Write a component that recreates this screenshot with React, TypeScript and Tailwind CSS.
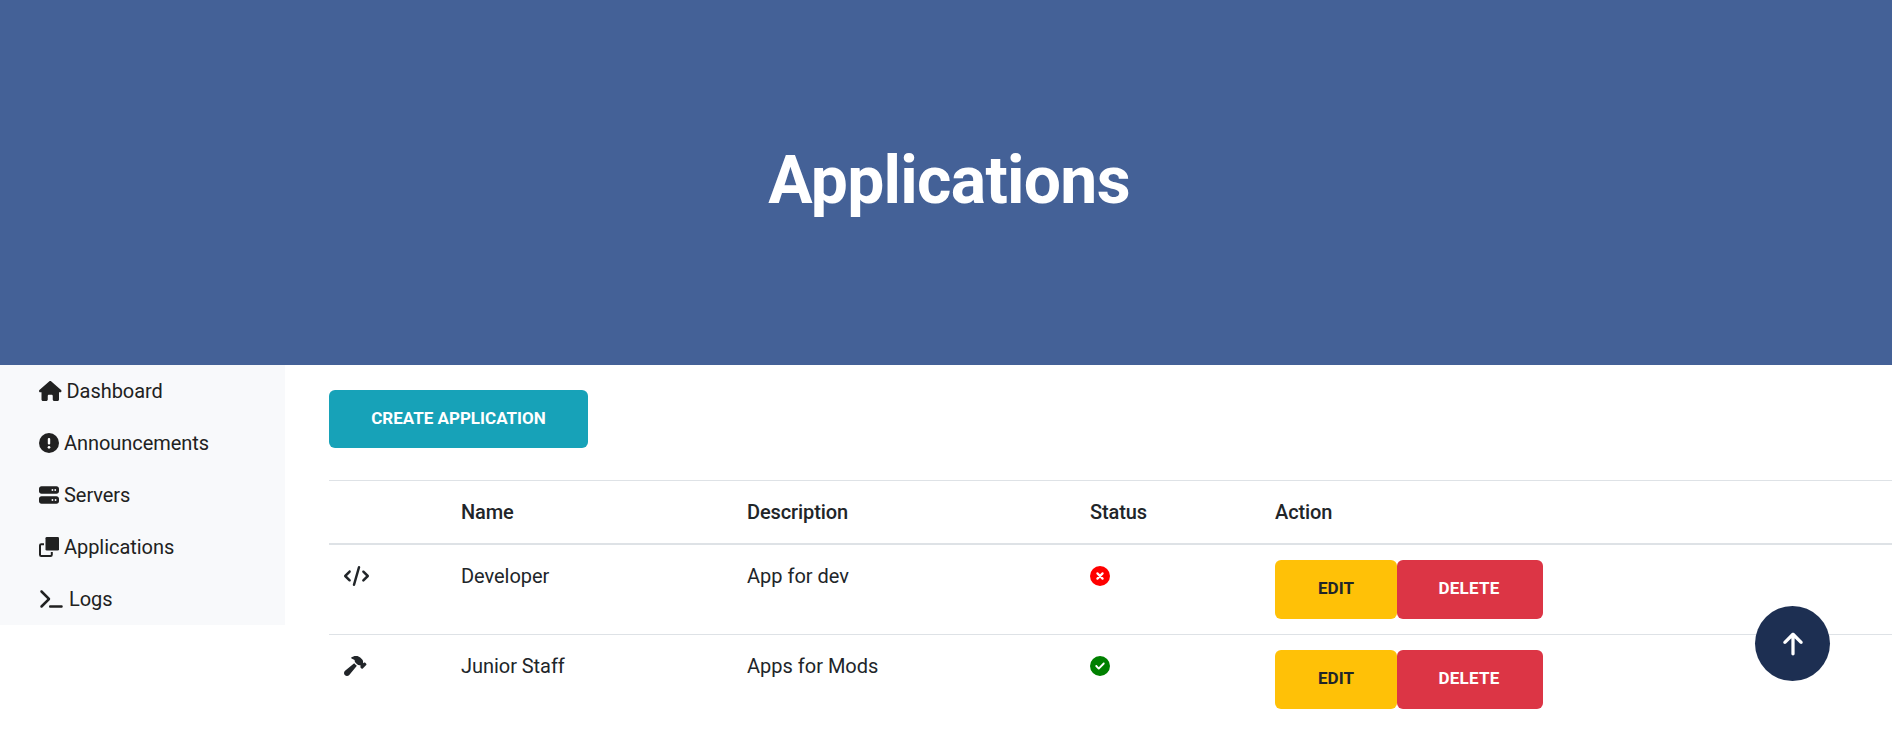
import type { ReactNode } from "react";
import {
  FaArrowUp,
  FaCircleCheck,
  FaCode,
  FaHammer,
  FaHouse,
  FaServer,
  FaTerminal,
} from "react-icons/fa6";

function AlertIcon() {
  return (
    <svg viewBox="0 0 20 20" className="size-5" aria-hidden="true">
      <circle cx="10" cy="10" r="10" fill="currentColor" />
      <rect x="8.8" y="5" width="2.4" height="6.6" rx="1" fill="white" />
      <circle cx="10" cy="14.3" r="1.35" fill="white" />
    </svg>
  );
}

function CopiesIcon() {
  return (
    <svg viewBox="0 0 20 20" className="size-5" aria-hidden="true">
      <rect x="6.5" width="13.5" height="13.5" rx="1.3" fill="currentColor" />
      <path d="M5 7.2H2.2Q1 7.2 1 8.4V17.8Q1 19 2.2 19H11.6Q12.8 19 12.8 17.8V15" fill="none" stroke="currentColor" strokeWidth="2" />
    </svg>
  );
}

function ClosedIcon() {
  return (
    <svg viewBox="0 0 20 20" className="size-5 text-[#ff0000]" aria-hidden="true">
      <circle cx="10" cy="10" r="10" fill="currentColor" />
      <path d="M7.4 7.4L12.6 12.6M12.6 7.4L7.4 12.6" fill="none" stroke="white" strokeWidth="2.2" strokeLinecap="round" />
    </svg>
  );
}

const links: { label: string; icon: ReactNode }[] = [
  { label: "Dashboard", icon: <FaHouse className="h-5 w-[22.5px]" /> },
  { label: "Announcements", icon: <AlertIcon /> },
  { label: "Servers", icon: <FaServer className="size-5" /> },
  { label: "Applications", icon: <CopiesIcon /> },
  { label: "Logs", icon: <FaTerminal className="h-5 w-[25px]" /> },
];

const rows = [
  { name: "Developer", description: "App for dev", open: false, icon: <FaCode className="h-5 w-[25px]" /> },
  { name: "Junior Staff", description: "Apps for Mods", open: true, icon: <FaHammer className="h-5 w-[22.5px]" /> },
];

const columns = "grid grid-cols-[132px_286px_343px_185px_1fr]";

export default function App() {
  return (
    <div className="relative h-[731px] w-full overflow-hidden bg-white font-['Roboto',sans-serif] text-[20px] leading-[30px] text-[#212529]">
      <header className="flex h-[365px] items-center justify-center bg-[#446197] pb-1">
        <h1 className="pl-[6px] text-[66px] leading-[80px] font-bold tracking-[-0.7px] text-white">Applications</h1>
      </header>
      <div className="flex items-start">
        <nav className="w-[285px] shrink-0 bg-[#f8f9fb] tracking-[-0.05px] text-[#212121]">
          {links.map((l) => (
            <a key={l.label} href="#" className="flex h-[52px] items-center gap-[5px] pl-[39px]">
              {l.icon}
              <span>{l.label}</span>
            </a>
          ))}
        </nav>
        <main className="min-w-0 flex-1 pt-[25px] pl-11">
          <button className="flex h-[58px] w-[259px] items-center justify-center rounded-[6px] bg-[#17a2b8] pb-[3px] text-[17px] font-bold text-white">
            CREATE APPLICATION
          </button>
          <div className="mt-8 border-t border-[#dee2e6]">
            <div className={`${columns} h-16 items-center border-b-2 border-[#dee2e6] font-medium tracking-[-0.1px]`}>
              <span />
              <span>Name</span>
              <span>Description</span>
              <span>Status</span>
              <span>Action</span>
            </div>
            {rows.map((r, i) => (
              <div key={r.name} className={`${columns} items-start pt-[15px] ${i > 0 ? "h-[90px] border-t border-[#dee2e6]" : "h-[89px]"}`}>
                <span className="flex h-[31px] items-center pl-[15px]">{r.icon}</span>
                <span className="pt-px tracking-[-0.05px]">{r.name}</span>
                <span className="pt-px">{r.description}</span>
                <span className="flex h-[31px] items-center">
                  {r.open ? <FaCircleCheck className="size-5 text-[#008000]" /> : <ClosedIcon />}
                </span>
                <span className="flex text-[17px] font-bold">
                  <button className="h-[58.5px] w-[122px] rounded-[6px] bg-[#ffc107] pb-[3px] text-[#212529]">EDIT</button>
                  <button className="h-[58.5px] w-[146px] rounded-[6px] bg-[#dc3545] pr-[2px] pb-[3px] tracking-[0.25px] text-white">DELETE</button>
                </span>
              </div>
            ))}
          </div>
        </main>
      </div>
      <a href="#" aria-label="Back to top" className="absolute top-[606px] left-[1755px] flex size-[75px] items-center justify-center rounded-full bg-[#1d2f52] text-white">
        <FaArrowUp className="size-[26px]" />
      </a>
    </div>
  );
}
